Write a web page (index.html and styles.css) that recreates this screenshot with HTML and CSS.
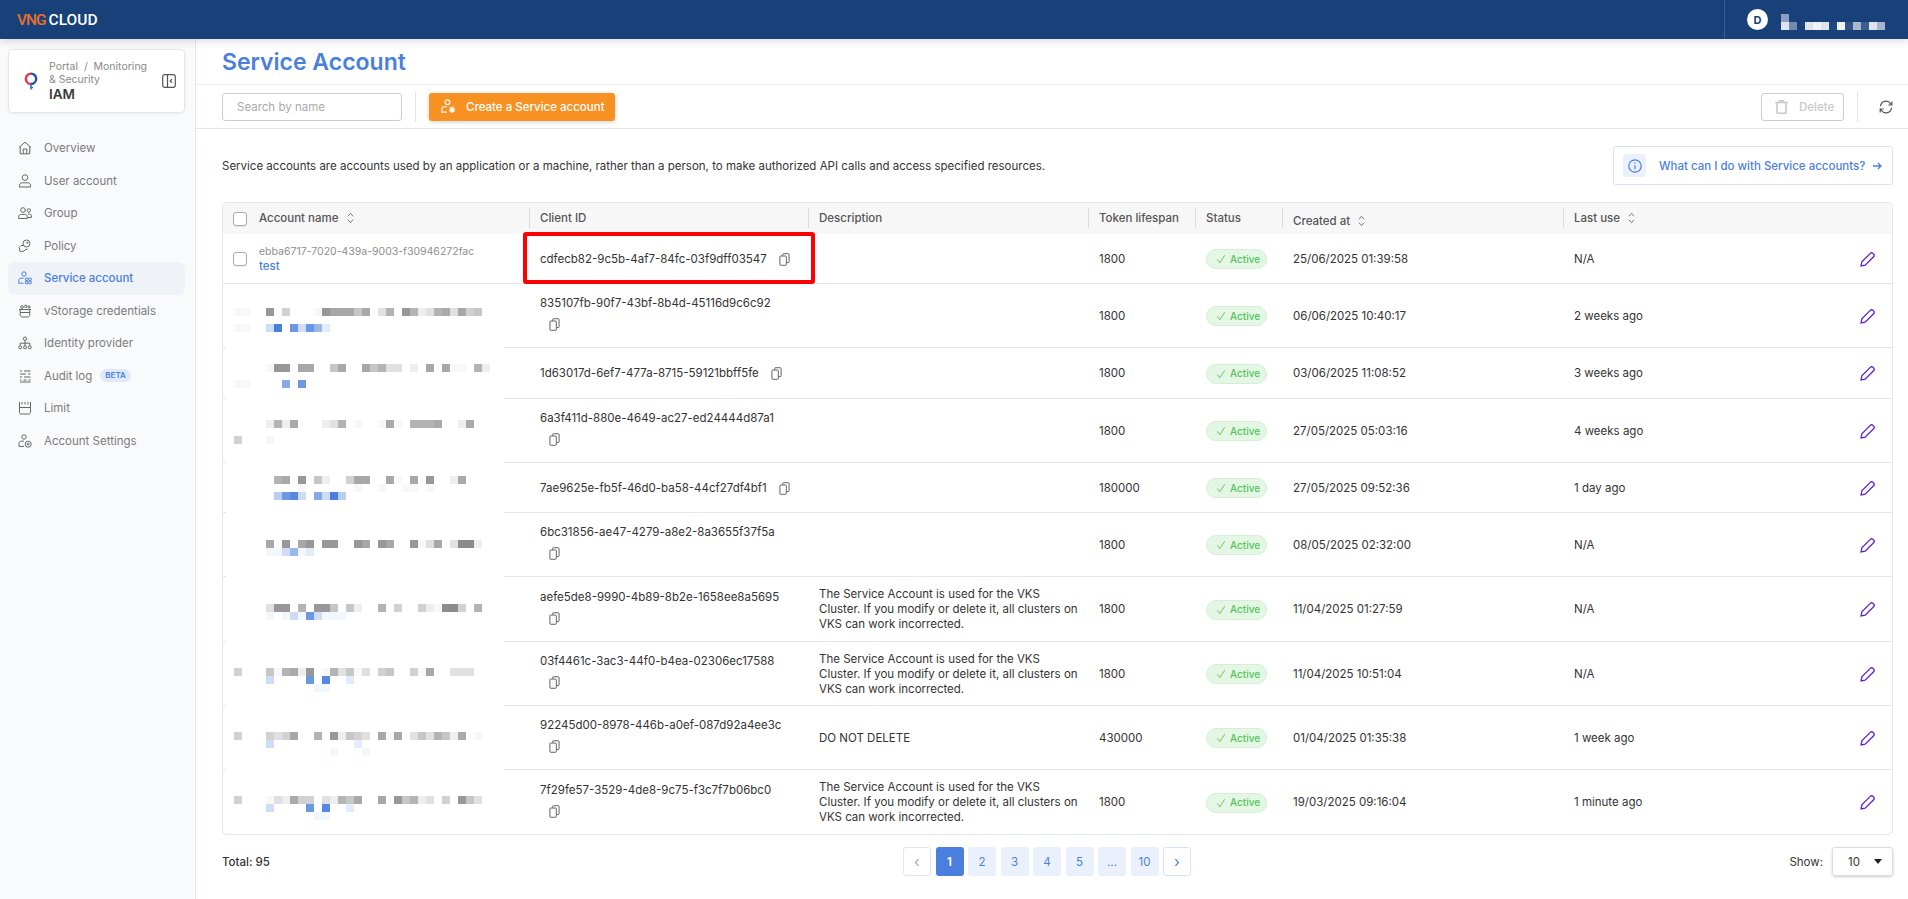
FILE: index.html
```html
<!DOCTYPE html>
<html>
<head>
	<title>Service Account</title>
	<meta name="viewport" content="width=device-width, initial-scale=1" />
	<link rel="stylesheet" href="styles.css">
</head>
<body>
	<svg class="defs" width="0" height="0">
		<symbol id="i-copy" viewBox="0 0 12 14"><path d="M4 3V1.500A.8.8 0 0 1 4.800.7h5.400a.8.8 0 0 1 .8.8v8a.8.8 0 0 1-.8.8H8.500M1.800 3.200h5.400a.8.8 0 0 1 .8.8v8.500a.8.8 0 0 1-.8.8H1.800a.8.8 0 0 1-.8-.8V4a.8.8 0 0 1 .8-.8z"/></symbol>
		<symbol id="i-edit" viewBox="0 0 14 14"><path d="M9.600 1.300a1.800 1.800 0 0 1 2.500 0l.6.6a1.800 1.800 0 0 1 0 2.500L4.800 12.300 1 13l.7-3.800z"/></symbol>
		<symbol id="i-check" viewBox="0 0 12 12"><path d="M1.500 6.500l3 4L10.500 1.500"/></symbol>
		<symbol id="i-sort" viewBox="0 0 8 14"><path d="M1 5l3-3.500L7 5M1 9l3 3.500L7 9"/></symbol>
	</svg>

	<header class="topbar">
		<div class="logo"><span class="logo-vng">VNG</span><span class="logo-cloud">CLOUD</span></div>
		<div class="user">
			<span class="avatar">D</span>
			<svg class="user-name" width="104" height="16" viewBox="1781 14 104 16" shape-rendering="crispEdges">
				<rect x="1781" y="14" width="8" height="8" fill="#8d9fbe"/>
				<rect x="1781" y="22" width="8" height="8" fill="#dfe4ee"/>
				<rect x="1789" y="22" width="8" height="8" fill="#748bb0"/>
				<rect x="1805" y="22" width="8" height="8" fill="#dfe5ee"/>
				<rect x="1813" y="22" width="8" height="8" fill="#f1f3f7"/>
				<rect x="1821" y="22" width="8" height="8" fill="#dfe4ee"/>
				<rect x="1829" y="22" width="8" height="8" fill="#1f4780"/>
				<rect x="1837" y="22" width="8" height="8" fill="#f0f2f6"/>
				<rect x="1845" y="22" width="8" height="8" fill="#2f5489"/>
				<rect x="1853" y="22" width="8" height="8" fill="#a9b8cf"/>
				<rect x="1861" y="22" width="8" height="8" fill="#3b5d90"/>
				<rect x="1869" y="22" width="8" height="8" fill="#dfe4ee"/>
				<rect x="1877" y="22" width="8" height="8" fill="#a6b5cd"/>
			</svg>
		</div>
	</header>

	<div class="layout">
		<aside class="sidebar">
			<div class="product-card">
				<svg class="product-icon" width="14" height="20" viewBox="0 0 14 20" fill="none">
					<path d="M7 13a5.200 5.200 0 1 1 0-10.400" stroke="#e8344e" stroke-width="2.400"/>
					<path d="M7 2.600a5.200 5.200 0 0 1 0 10.400" stroke="#1f4fa8" stroke-width="2.400"/>
					<path d="M7 13v5.500M7 16.500h2" stroke="#2b6fd6" stroke-width="1.600"/>
				</svg>
				<div class="product-text">
					<div class="crumbs">Portal &nbsp;/&nbsp; Monitoring &amp; Security</div>
					<div class="product-name">IAM</div>
				</div>
				<svg class="collapse" width="14" height="14" viewBox="0 0 14 14" fill="none">
					<rect x=".7" y=".7" width="12.600" height="12.600" rx="2" stroke="#555" stroke-width="1.200"/>
					<path d="M5.500 1v12" stroke="#555" stroke-width="1.200"/>
					<path d="M10 5.200L8.200 7l1.800 1.800" stroke="#555" stroke-width="1.200"/>
				</svg>
			</div>
			<nav class="nav">
				<a class="nav-item"><svg class="nav-icon" viewBox="0 0 14 14"><path d="M1 6.500L7 1.200l6 5.300M2.200 5.500v7.300h9.600V5.500M5.200 12.800V8h3.600v4.800"/></svg>Overview</a>
				<a class="nav-item"><svg class="nav-icon" viewBox="0 0 14 14"><circle cx="7" cy="3.600" r="2.800"/><path d="M1.500 13v-1.800C1.500 9.500 3 8.800 4.500 8.800h5c1.500 0 3 .7 3 2.400V13z"/></svg>User account</a>
				<a class="nav-item"><svg class="nav-icon" viewBox="0 0 14 14"><circle cx="5" cy="4" r="2.300"/><circle cx="10.800" cy="4.400" r="1.700"/><path d="M.7 12.500v-1.700c0-1.500 1.200-2.400 2.600-2.400h3.400c1.400 0 2.600.9 2.600 2.400v1.700zM9.800 8h1.500c1.200 0 2.100.8 2.100 2v1.500h-3.600"/></svg>Group</a>
				<a class="nav-item"><svg class="nav-icon" viewBox="0 0 14 14"><circle cx="8.500" cy="4.500" r="3.500"/><circle cx="9.300" cy="3.800" r=".6"/><path d="M5.500 6.500l-2.500 0-2 2 1 2-.5 1.500 2 .5 2.500-.5 1.500-1.500 2-.5"/></svg>Policy</a>
				<a class="nav-item active"><svg class="nav-icon" viewBox="0 0 14 14"><circle cx="6" cy="3" r="2.200"/><path d="M5.500 7.200H3c-1.300 0-2.200.9-2.200 2.200v2.800h4.700"/><rect x="7.400" y="7" width="2.500" height="2.500" rx=".6"/><rect x="10.800" y="7" width="2.500" height="2.500" rx=".6"/><rect x="7.400" y="10.300" width="2.500" height="2.500" rx=".6"/><rect x="10.800" y="10.300" width="2.500" height="2.500" rx=".6"/></svg>Service account</a>
				<a class="nav-item"><svg class="nav-icon" viewBox="0 0 14 14"><path d="M1 5.500h12M2.200 5.500v5.300c0 1.300 1 2.200 2.200 2.200h5.200c1.200 0 2.200-.9 2.200-2.200V5.500M2.300 8.500h9.400"/><circle cx="4" cy="3" r="1.300"/><circle cx="7.800" cy="2.300" r="1.200"/><circle cx="11" cy="3" r="1.100"/></svg>vStorage credentials</a>
				<a class="nav-item"><svg class="nav-icon" viewBox="0 0 14 14"><rect x="5.300" y="1" width="3.400" height="3.400" rx="1.700"/><circle cx="2.200" cy="11.300" r="1.500"/><circle cx="7" cy="11.300" r="1.500"/><circle cx="11.800" cy="11.300" r="1.500"/><path d="M7 4.400v5.400M2.200 9.800V7.200h9.600v2.600"/></svg>Identity provider</a>
				<a class="nav-item"><svg class="nav-icon" viewBox="0 0 14 14"><path d="M2 2h2M6 2h6.500M2 5h6M10 5h2.500M2 8h2M6 8h6.500M2 11h1.500M5.500 11h3M10.500 11h2M2 13h10.500"/></svg>Audit log<span class="beta">BETA</span></a>
				<a class="nav-item"><svg class="nav-icon" viewBox="0 0 14 14"><path d="M1.500 1v10.500c0 .8.700 1.500 1.500 1.500h8c.8 0 1.500-.7 1.500-1.500V1M1.500 6.500h11M4 1v2.500M7 1v2.500M10 1v2.500"/></svg>Limit</a>
				<a class="nav-item"><svg class="nav-icon" viewBox="0 0 14 14"><circle cx="6" cy="3" r="2.200"/><path d="M6 7.200H3.200C2 7.200 1 8.100 1 9.400v3h5"/><circle cx="10.200" cy="10.200" r="3"/><circle cx="10.200" cy="10.200" r=".9"/></svg>Account Settings</a>
			</nav>
		</aside>

		<main class="main">
			<div class="title-bar"><h1>Service Account</h1></div>
			<div class="toolbar">
				<input class="search" type="text" placeholder="Search by name">
				<span class="vline"></span>
				<button class="btn-create">
					<svg width="15" height="15" viewBox="0 0 14 14" fill="none" stroke="#fff" stroke-width="1.100"><circle cx="6" cy="3" r="2.200"/><path d="M5.500 7.200H3c-1.300 0-2.200.9-2.200 2.200v2.800h4.700"/><path d="M10.300 7v6M7.300 10h6M8.200 7.900l4.200 4.200M12.400 7.900l-4.200 4.200"/></svg>
					Create a Service account
				</button>
				<span class="spacer"></span>
				<button class="btn-delete">
					<svg width="13" height="14" viewBox="0 0 13 14" fill="none" stroke="#c9c9c9" stroke-width="1.600"><path d="M0 2.500h13M4.500 2V.8h4V2M2 3v9.500c0 .4.300.7.700.7h7.600c.4 0 .7-.3.700-.7V3"/></svg>
					Delete
				</button>
				<span class="vline vline-right"></span>
				<svg class="refresh" width="14" height="14" viewBox="0 0 14 14" fill="none" stroke="#555" stroke-width="1.200"><path d="M1.500 6.200A5.500 5.500 0 0 1 11.500 3.500L12.800 5M12.800 1.500V5H9.300M12.500 7.800A5.500 5.500 0 0 1 2.500 10.500L1.200 9M1.200 12.500V9h3.500"/></svg>
			</div>

			<div class="intro">
				<p>Service accounts are accounts used by an application or a machine, rather than a person, to make authorized API calls and access specified resources.</p>
				<a class="help-link">
					<span class="help-icon"><svg width="14" height="14" viewBox="0 0 14 14" fill="none" stroke="#4a7fde" stroke-width="1.200"><circle cx="7" cy="7" r="6.200"/><path d="M7 6.300v4M7 3.600v1.200"/></svg></span>
					What can I do with Service accounts?
					<svg class="help-arrow" width="9" height="8" viewBox="0 0 9 8" fill="none" stroke="#4a7fde" stroke-width="1.300"><path d="M0 4h8M5 1l3 3-3 3"/></svg>
				</a>
			</div>

			<div class="table-wrap">
				<table class="accounts">
					<colgroup>
						<col class="c-name"><col class="c-id"><col class="c-desc"><col class="c-token"><col class="c-status"><col class="c-created"><col class="c-last">
					</colgroup>
					<thead>
						<tr>
							<th class="first"><span class="check"></span>Account name<svg class="sort"><use href="#i-sort"/></svg></th>
							<th>Client ID</th>
							<th>Description</th>
							<th>Token lifespan</th>
							<th>Status</th>
							<th><span class="low">Created at<svg class="sort"><use href="#i-sort"/></svg></span></th>
							<th>Last use<svg class="sort"><use href="#i-sort"/></svg></th>
						</tr>
					</thead>
					<tbody>
						<tr class="h50">
							<td class="first"><span class="check"></span><div class="acc"><div class="acc-id">ebba6717-7020-439a-9003-f30946272fac</div><a class="acc-link">test</a></div></td>
							<td class="marked">cdfecb82-9c5b-4af7-84fc-03f9dff03547 <svg class="copy"><use href="#i-copy"/></svg></td>
							<td></td><td>1800</td>
							<td><span class="badge"><svg><use href="#i-check"/></svg>Active</span></td>
							<td>25/06/2025 01:39:58</td>
							<td class="last">N/A<svg class="edit"><use href="#i-edit"/></svg></td>
						</tr>
						<tr class="h64">
							<td></td>
							<td class="two">835107fb-90f7-43bf-8b4d-45116d9c6c92 <svg class="copy"><use href="#i-copy"/></svg></td>
							<td></td><td>1800</td>
							<td><span class="badge"><svg><use href="#i-check"/></svg>Active</span></td>
							<td>06/06/2025 10:40:17</td>
							<td class="last">2 weeks ago<svg class="edit"><use href="#i-edit"/></svg></td>
						</tr>
						<tr class="h51">
							<td></td>
							<td>1d63017d-6ef7-477a-8715-59121bbff5fe <svg class="copy"><use href="#i-copy"/></svg></td>
							<td></td><td>1800</td>
							<td><span class="badge"><svg><use href="#i-check"/></svg>Active</span></td>
							<td>03/06/2025 11:08:52</td>
							<td class="last">3 weeks ago<svg class="edit"><use href="#i-edit"/></svg></td>
						</tr>
						<tr class="h64">
							<td></td>
							<td class="two">6a3f411d-880e-4649-ac27-ed24444d87a1 <svg class="copy"><use href="#i-copy"/></svg></td>
							<td></td><td>1800</td>
							<td><span class="badge"><svg><use href="#i-check"/></svg>Active</span></td>
							<td>27/05/2025 05:03:16</td>
							<td class="last">4 weeks ago<svg class="edit"><use href="#i-edit"/></svg></td>
						</tr>
						<tr class="h50">
							<td></td>
							<td>7ae9625e-fb5f-46d0-ba58-44cf27df4bf1 <svg class="copy"><use href="#i-copy"/></svg></td>
							<td></td><td>180000</td>
							<td><span class="badge"><svg><use href="#i-check"/></svg>Active</span></td>
							<td>27/05/2025 09:52:36</td>
							<td class="last">1 day ago<svg class="edit"><use href="#i-edit"/></svg></td>
						</tr>
						<tr class="h64">
							<td></td>
							<td class="two">6bc31856-ae47-4279-a8e2-8a3655f37f5a <svg class="copy"><use href="#i-copy"/></svg></td>
							<td></td><td>1800</td>
							<td><span class="badge"><svg><use href="#i-check"/></svg>Active</span></td>
							<td>08/05/2025 02:32:00</td>
							<td class="last">N/A<svg class="edit"><use href="#i-edit"/></svg></td>
						</tr>
						<tr class="h65">
							<td></td>
							<td class="two">aefe5de8-9990-4b89-8b2e-1658ee8a5695 <svg class="copy"><use href="#i-copy"/></svg></td>
							<td>The Service Account is used for the VKS Cluster. If you modify or delete it, all clusters on VKS can work incorrected.</td>
							<td>1800</td>
							<td><span class="badge"><svg><use href="#i-check"/></svg>Active</span></td>
							<td>11/04/2025 01:27:59</td>
							<td class="last">N/A<svg class="edit"><use href="#i-edit"/></svg></td>
						</tr>
						<tr class="h64">
							<td></td>
							<td class="two">03f4461c-3ac3-44f0-b4ea-02306ec17588 <svg class="copy"><use href="#i-copy"/></svg></td>
							<td>The Service Account is used for the VKS Cluster. If you modify or delete it, all clusters on VKS can work incorrected.</td>
							<td>1800</td>
							<td><span class="badge"><svg><use href="#i-check"/></svg>Active</span></td>
							<td>11/04/2025 10:51:04</td>
							<td class="last">N/A<svg class="edit"><use href="#i-edit"/></svg></td>
						</tr>
						<tr class="h64">
							<td></td>
							<td class="two">92245d00-8978-446b-a0ef-087d92a4ee3c <svg class="copy"><use href="#i-copy"/></svg></td>
							<td>DO NOT DELETE</td>
							<td>430000</td>
							<td><span class="badge"><svg><use href="#i-check"/></svg>Active</span></td>
							<td>01/04/2025 01:35:38</td>
							<td class="last">1 week ago<svg class="edit"><use href="#i-edit"/></svg></td>
						</tr>
						<tr class="h64 end">
							<td></td>
							<td class="two">7f29fe57-3529-4de8-9c75-f3c7f7b06bc0 <svg class="copy"><use href="#i-copy"/></svg></td>
							<td>The Service Account is used for the VKS Cluster. If you modify or delete it, all clusters on VKS can work incorrected.</td>
							<td>1800</td>
							<td><span class="badge"><svg><use href="#i-check"/></svg>Active</span></td>
							<td>19/03/2025 09:16:04</td>
							<td class="last">1 minute ago<svg class="edit"><use href="#i-edit"/></svg></td>
						</tr>
					</tbody>
				</table>
				<svg id="mosaic" class="mosaic" viewBox="226 284 278 549" shape-rendering="crispEdges"></svg>
			</div>

			<div class="table-foot">
				<div class="total">Total: 95</div>
				<div class="pager">
					<span class="pg arrow off">‹</span>
					<span class="pg on">1</span>
					<span class="pg">2</span>
					<span class="pg">3</span>
					<span class="pg">4</span>
					<span class="pg">5</span>
					<span class="pg">...</span>
					<span class="pg">10</span>
					<span class="pg arrow">›</span>
				</div>
				<div class="show">Show:<span class="show-select">10<i class="caret"></i></span></div>
			</div>
		</main>
	</div>
	<script src="script.js"></script>
</body>
</html>
```

FILE: styles.css
```css
* {
	box-sizing: border-box;
}
html, body {
	height: 100%;
}
body {
	margin: 0;
	overflow: hidden;
	font-family: Inter, "Noto Sans", sans-serif;
	font-size: 11.500px;
	color: #333;
	background: #fff;
}
.defs {
	display: block;
	height: 0;
}

/* top bar */
.topbar {
	position: relative;
	z-index: 2;
	display: flex;
	justify-content: space-between;
	height: 39px;
	background: #18417a;
	box-shadow: 0 2px 8px rgba(0, 0, 0, 0.15);
}
.logo {
	display: flex;
	align-items: center;
	padding-left: 17px;
	font-family: Roboto, sans-serif;
	font-size: 15.500px;
	font-weight: 500;
}
.logo-vng {
	color: #e8702a;
	margin-right: 3px;
	letter-spacing: -1px;
}
.logo-cloud {
	color: #fff;
}
.user {
	display: flex;
	align-items: center;
	width: 184px;
	padding-left: 22px;
	border-left: 1px solid #3a5d8f;
}
.avatar {
	display: flex;
	align-items: center;
	justify-content: center;
	width: 21px;
	height: 21px;
	margin-right: 13px;
	border-radius: 50%;
	background: #fff;
	color: #18417a;
	font-size: 11px;
	font-weight: 700;
}
.user-name {
	margin-top: 5px;
}

.layout {
	display: flex;
	height: calc(100% - 39px);
}

/* sidebar */
.sidebar {
	flex: none;
	width: 196px;
	padding: 10px 10px 0 8px;
	background: #f9fafc;
	border-right: 1px solid #e6e7ea;
}
.product-card {
	display: flex;
	align-items: center;
	height: 64px;
	padding: 0 8px 0 15px;
	background: #fff;
	border: 1px solid #e4e6ea;
	border-radius: 5px;
	box-shadow: 0 1px 3px rgba(0, 0, 0, 0.06);
}
.product-icon {
	flex: none;
	margin-right: 11px;
}
.product-text {
	flex: 1;
}
.crumbs {
	font-size: 10.500px;
	line-height: 13px;
	color: #8a8a8a;
	width: 104px;
}
.product-name {
	font-size: 13.500px;
	line-height: 16px;
	font-weight: 600;
	color: #3a3a3a;
}
.collapse {
	flex: none;
}
.nav {
	margin-top: 19px;
}
.nav-item {
	display: flex;
	align-items: center;
	height: 32.500px;
	padding-left: 10px;
	border-radius: 7px;
	color: #7b7b7b;
	font-size: 11.500px;
}
.nav-item.active {
	background: #eff2f7;
	color: #4a7fde;
	font-weight: 500;
}
.nav-icon {
	flex: none;
	width: 14px;
	height: 14px;
	margin-right: 12px;
	fill: none;
	stroke: #666;
	stroke-width: 1;
}
.nav-item.active .nav-icon {
	stroke: #4a7fde;
}
.beta {
	margin-left: 8px;
	padding: 0 5px;
	height: 13px;
	line-height: 13px;
	border-radius: 7px;
	background: #dfe9fa;
	color: #4a7fde;
	font-size: 8px;
	font-weight: 600;
}

/* main column */
.main {
	flex: 1;
	min-width: 0;
}
.title-bar {
	height: 46px;
	padding-left: 26px;
	border-bottom: 1px solid #eceef0;
}
.title-bar h1 {
	margin: 0;
	font-size: 23px;
	line-height: 46px;
	font-weight: 600;
	color: #4a7fde;
}
.toolbar {
	display: flex;
	align-items: center;
	height: 44px;
	padding: 0 15px 0 26px;
	border-bottom: 1px solid #e3e4e6;
}
.search {
	width: 180px;
	height: 28px;
	padding: 0 14px;
	border: 1px solid #ccc;
	border-radius: 3px;
	font-family: inherit;
	font-size: 11.500px;
}
.search::placeholder {
	color: #aaa;
}
.vline {
	width: 1px;
	height: 30px;
	margin: 0 13px;
	background: #e4e4e4;
}
.btn-create {
	display: flex;
	align-items: center;
	gap: 10px;
	width: 186px;
	height: 28px;
	padding: 0 0 0 12px;
	border: 0;
	border-radius: 3px;
	background: #f79122;
	box-shadow: 0 1px 4px rgba(0, 0, 0, 0.2);
	color: #fff;
	font-family: inherit;
	font-size: 11.500px;
	font-weight: 500;
}
.spacer {
	flex: 1;
}
.btn-delete {
	display: flex;
	align-items: center;
	gap: 11px;
	width: 83px;
	height: 28px;
	padding: 0 0 0 13px;
	background: #fff;
	border: 1px solid #ccc;
	border-radius: 3px;
	color: #c9c9c9;
	font-family: inherit;
	font-size: 11.500px;
	font-weight: 500;
}
.vline-right {
	margin: 0 21px 0 13px;
}
.intro {
	display: flex;
	align-items: center;
	justify-content: space-between;
	padding: 17px 15px 17px 26px;
}
.intro p {
	margin: 0;
	color: #333;
}
.help-link {
	display: flex;
	align-items: center;
	width: 280px;
	height: 39px;
	padding-left: 9px;
	border: 1px solid #d5e3f8;
	border-radius: 3px;
	color: #4a7fde;
	font-weight: 500;
}
.help-icon {
	display: flex;
	align-items: center;
	justify-content: center;
	width: 23px;
	height: 23px;
	margin-right: 13px;
	border-radius: 3px;
	background: #eaf1fc;
}
.help-arrow {
	margin-left: 8px;
}

/* table */
.table-wrap {
	position: relative;
	margin: 0 15px 0 26px;
	border: 1px solid #e5e6e8;
	border-radius: 5px;
	overflow: hidden;
}
.accounts {
	width: 100%;
	table-layout: fixed;
	border-collapse: separate;
	border-spacing: 0;
}
.c-name { width: 306px; }
.c-id { width: 279px; }
.c-desc { width: 280px; }
.c-token { width: 107px; }
.c-status { width: 87px; }
.c-created { width: 281px; }
.accounts th {
	position: relative;
	height: 31px;
	padding: 0 11px 2px;
	background: #f7f7f7;
	text-align: left;
	font-size: 11.500px;
	font-weight: 500;
	color: #555;
}
.accounts th + th::before {
	content: "";
	position: absolute;
	left: 0;
	top: 5px;
	height: 20px;
	width: 1px;
	background: #dcdcdc;
}
.accounts th.first, .accounts td.first {
	padding-left: 36px;
	position: relative;
}
.check {
	position: absolute;
	left: 10px;
	top: 50%;
	width: 14px;
	height: 14px;
	margin-top: -7px;
	background: #fff;
	border: 1px solid #aaa;
	border-radius: 3px;
	box-shadow: 0 1px 1px rgba(0, 0, 0, 0.08);
}
.sort {
	width: 7px;
	height: 12px;
	margin-left: 8px;
	vertical-align: -2px;
	fill: none;
	stroke: #666;
	stroke-width: 1;
}
.low {
	position: relative;
	top: 3px;
}
.accounts td {
	padding: 1px 8px 0 11px;
	border-bottom: 1px solid #e5e6e8;
	font-size: 11.500px;
	line-height: 15px;
	color: #333;
	vertical-align: middle;
}
.end td {
	border-bottom: 0;
}
.h50 { height: 50px; }
.h51 { height: 51px; }
.h64 { height: 64px; }
.h65 { height: 65px; }
.accounts td.two {
	padding-bottom: 4px;
	line-height: 21px;
}
.acc-id {
	color: #8f8f8f;
	font-size: 10.500px;
}
.acc-link {
	color: #4a7fde;
	font-weight: 500;
}
.copy {
	width: 11px;
	height: 13px;
	margin: 0 9px;
	vertical-align: -3px;
	fill: none;
	stroke: #555;
	stroke-width: 1;
}
.marked {
	position: relative;
}
.marked::after {
	content: "";
	position: absolute;
	top: -2px;
	left: -6px;
	right: -7px;
	bottom: -1px;
	border: 4px solid #fe0000;
	border-radius: 3px;
}
.badge {
	display: inline-flex;
	align-items: center;
	gap: 4px;
	width: 61px;
	height: 20px;
	padding-left: 9px;
	border: 1px solid #d3f0d3;
	border-radius: 10px;
	background: #e4f7e4;
	color: #55c45a;
	font-size: 10px;
	font-weight: 500;
}
.badge svg {
	width: 10px;
	height: 10px;
	fill: none;
	stroke: #55c45a;
	stroke-width: 1.100;
}
.last {
	position: relative;
}
.edit {
	position: absolute;
	right: 17px;
	top: 50%;
	width: 15px;
	height: 15px;
	margin-top: -7px;
	fill: none;
	stroke: #5b21d6;
	stroke-width: 1.200;
}
.mosaic {
	position: absolute;
	left: 3px;
	top: 81px;
	width: 278px;
	height: 549px;
	background: #fff;
}

/* footer */
.table-foot {
	display: grid;
	grid-template-columns: 1fr auto 1fr;
	align-items: center;
	margin: 12px 15px 0 26px;
}
.total {
	font-weight: 500;
}
.pager {
	display: flex;
	gap: 4.500px;
	margin-right: 21px;
}
.pg {
	display: flex;
	align-items: center;
	justify-content: center;
	width: 28px;
	height: 29px;
	border-radius: 3px;
	background: #eaf1fc;
	color: #4a7fde;
}
.pg.on {
	background: #4a7fde;
	color: #fff;
	font-weight: 600;
}
.pg.arrow {
	background: #fff;
	border: 1px solid #d5e3f8;
	font-size: 15px;
}
.pg.off {
	border-color: #e5e5e5;
	color: #aaa;
}
.show {
	display: flex;
	align-items: center;
	justify-content: flex-end;
	gap: 9px;
}
.show-select {
	display: flex;
	align-items: center;
	justify-content: space-between;
	width: 61px;
	height: 29px;
	padding: 0 10px 0 15px;
	border: 1px solid #ddd;
	border-radius: 3px;
	box-shadow: 0 1px 3px rgba(0, 0, 0, 0.2);
}
.caret {
	width: 0;
	height: 0;
	border-left: 4px solid transparent;
	border-right: 4px solid transparent;
	border-top: 5px solid #222;
}
```

FILE: script.js
```js
// blurred account names: one char per 8px cell, starting at x=234
var grays = {1:'#f8f8f8', 2:'#eeeeee', 3:'#e0e0e0', 4:'#d2d2d2', 5:'#c6c6c6', 6:'#b4b4b4', 7:'#a8a8a8', 8:'#989898', 9:'#8c8c8c'}
var blues = {a:'#f2f6fd', b:'#e4ecfb', c:'#cfdcf6', d:'#b9cdf1', e:'#9bb8ec', f:'#88a9e8', g:'#6c97e3', h:'#5688e0', i:'#4a7fde'}

var lines = [
	[308, '11..8.4...1877757.36.8623673745'],
	[324, '11..ci.gcgeb'],
	[364, '....188.77..57..75633.2.7.711.62'],
	[380, '11....f.g'],
	[420, '....2627...236.1..171.6667..27'],
	[436, '4...a'],
	[476, '.....67.8.52..477..71.7.8..27'],
	[484, '........1......1..1..11.1'],
	[492, '.....dghc.fcid'],
	[540, '....7.8.78.88..87.87..8137.3992'],
	[548, '....aaceab'],
	[604, '....388.6.885.52..6.4..421994.6'],
	[612, '....a.acagcaaa'],
	[668, '4...516728.163513.45..417..333'],
	[676, '....c....g.h..b'],
	[684, '..........aa'],
	[732, '4...4347..6.82543.717.3536527.1'],
	[740, '....c..........b'],
	[748, '............a...a'],
	[796, '4...132744.32657..7.85623.4.853'],
	[804, '....c....g.h..b'],
	[812, '..........aa']
]

var svg = document.querySelector('#mosaic')
lines.forEach(function (line) {
	line[1].split('').forEach(function (ch, i) {
		var color = grays[ch] || blues[ch]
		if (!color) return
		var r = document.createElementNS('http://www.w3.org/2000/svg', 'rect')
		r.setAttribute('x', 234 + i * 8)
		r.setAttribute('y', line[0])
		r.setAttribute('width', 8)
		r.setAttribute('height', 8)
		r.setAttribute('fill', color)
		svg.appendChild(r)
	})
})
```
